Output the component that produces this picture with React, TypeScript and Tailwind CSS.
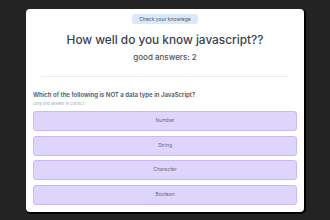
import React from 'react';

const answers = ['Number', 'String', 'Character', 'Boolean'];

export default function App() {
  return (
    <div className="h-[220px] w-[330px] bg-[#232323] pt-[9px] font-['Inter',sans-serif]">
      <div className="mx-[26px] flex h-[203px] w-[278px] flex-col rounded-[4px] bg-white px-[7px] pt-[5px] shadow-[1px_1px_0_1px_#000]">
        <div className="flex justify-center">
          <span className="rounded-[3px] bg-[#dbe7fb] px-[7px] py-[2px] text-[5px] leading-[6px] text-[#4b5563]">
            Check your knowlege
          </span>
        </div>
        <h1 className="mt-[8px] text-center text-[11.8px] leading-[16px] font-medium text-[#374151]">
          How well do you know javascript??
        </h1>
        <p className="mt-[3px] text-center text-[8px] leading-[12px] font-medium text-[#4b5563]">
          good answers: 2
        </p>
        <div className="mx-[8px] mt-[13px] h-px bg-[#ececec]" />
        <h2 className="mt-[13px] text-[6px] leading-[9px] font-semibold text-[#4b5563]">
          Which of the following is NOT a data type in JavaScript?
        </h2>
        <p className="mt-[2px] text-[4px] leading-[6px] text-[#9ca3af]">Only one answer is correct.</p>
        <div className="mt-[4px] flex flex-col gap-[4.5px]">
          {answers.map((a) => (
            <div
              key={a}
              className="flex h-[20px] items-center justify-center rounded-[3px] border border-[#c9b8f5] bg-[#ddd5fc] text-[5px] text-[#6b6b80]"
            >
              {a}
            </div>
          ))}
        </div>
      </div>
    </div>
  );
}
